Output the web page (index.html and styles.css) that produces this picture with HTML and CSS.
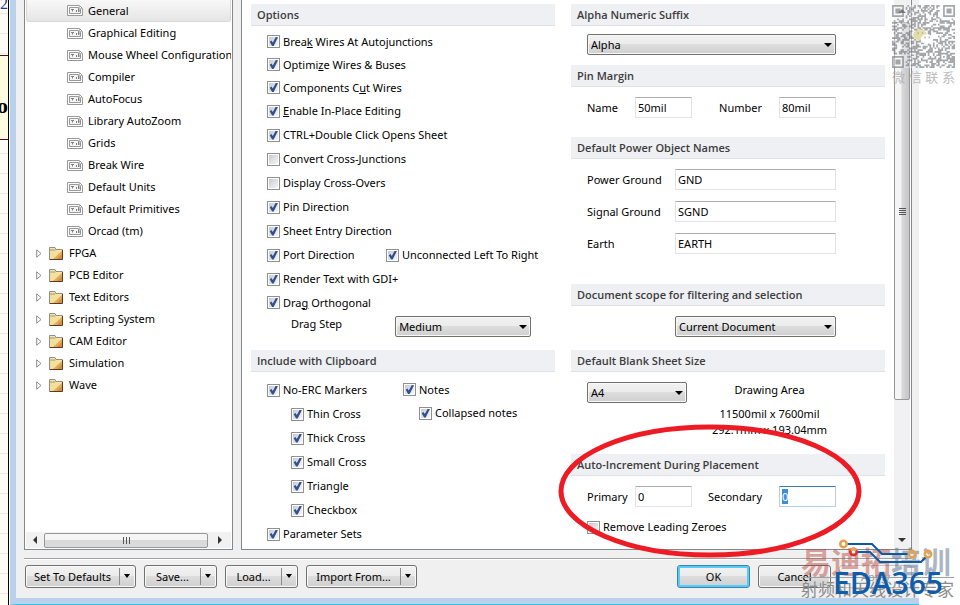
FILE: index.html
```html
<!DOCTYPE html>
<html lang="en">
<head>
<meta charset="utf-8">
<title>Preferences</title>
<link rel="stylesheet" href="styles.css">
</head>
<body>
<svg class="defs" aria-hidden="true">
  <symbol id="sheet" viewBox="0 0 16 11">
    <path d="M.5.5h12l3 3v7H.5z" fill="#fff" stroke="#999"/>
    <path d="M2.500 2.500h9v1.500h2v4.500h-11z" fill="#f4f4f4" stroke="#999"/>
    <path d="M4 4.500h3M5.500 4v2.500M9.500 5v2M11.500 4v3M13 5v2" stroke="#808080" fill="none"/>
    <path d="M12.500 .5v3h3" stroke="#bbb" fill="none"/>
  </symbol>
  <symbol id="folder" viewBox="0 0 14 13">
    <path d="M.5 12V.5H6l1 2h6.500V12z" fill="#f7e7a6" stroke="#8f8f8f"/>
    <path d="M1 3h5.500" stroke="#a0946a"/>
    <path d="M1 4h12v8H1z" fill="#f3e09a"/>
    <path d="M13 4v8H4z" fill="#e3a85c"/>
    <path d="M13 7v5H8z" fill="#d18f3f"/>
    <path d="M.5 12.500h13V3" stroke="#5a3a20" fill="none"/>
  </symbol>
  <symbol id="expand" viewBox="0 0 6 9">
    <path d="M.7.8v7.400L5 4.500z" fill="#fff" stroke="#8a8a8a"/>
  </symbol>
</svg>
<div class="screen">
  <aside class="sheet-edge">
    <div class="edge-label">2</div>
    <div class="edge-part">o</div>
  </aside>
  <div class="dialog">
    <div class="panes">
      <nav class="tree">
        <ul class="tree-list">
          <li class="node leaf selected"><svg class="i-sheet"><use href="#sheet"/></svg><a href="#">General</a></li>
          <li class="node leaf"><svg class="i-sheet"><use href="#sheet"/></svg><a href="#">Graphical Editing</a></li>
          <li class="node leaf"><svg class="i-sheet"><use href="#sheet"/></svg><a href="#">Mouse Wheel Configuration</a></li>
          <li class="node leaf"><svg class="i-sheet"><use href="#sheet"/></svg><a href="#">Compiler</a></li>
          <li class="node leaf"><svg class="i-sheet"><use href="#sheet"/></svg><a href="#">AutoFocus</a></li>
          <li class="node leaf"><svg class="i-sheet"><use href="#sheet"/></svg><a href="#">Library AutoZoom</a></li>
          <li class="node leaf"><svg class="i-sheet"><use href="#sheet"/></svg><a href="#">Grids</a></li>
          <li class="node leaf"><svg class="i-sheet"><use href="#sheet"/></svg><a href="#">Break Wire</a></li>
          <li class="node leaf"><svg class="i-sheet"><use href="#sheet"/></svg><a href="#">Default Units</a></li>
          <li class="node leaf"><svg class="i-sheet"><use href="#sheet"/></svg><a href="#">Default Primitives</a></li>
          <li class="node leaf"><svg class="i-sheet"><use href="#sheet"/></svg><a href="#">Orcad (tm)</a></li>
          <li class="node"><svg class="i-expand"><use href="#expand"/></svg><svg class="i-folder"><use href="#folder"/></svg><a href="#">FPGA</a></li>
          <li class="node"><svg class="i-expand"><use href="#expand"/></svg><svg class="i-folder"><use href="#folder"/></svg><a href="#">PCB Editor</a></li>
          <li class="node"><svg class="i-expand"><use href="#expand"/></svg><svg class="i-folder"><use href="#folder"/></svg><a href="#">Text Editors</a></li>
          <li class="node"><svg class="i-expand"><use href="#expand"/></svg><svg class="i-folder"><use href="#folder"/></svg><a href="#">Scripting System</a></li>
          <li class="node"><svg class="i-expand"><use href="#expand"/></svg><svg class="i-folder"><use href="#folder"/></svg><a href="#">CAM Editor</a></li>
          <li class="node"><svg class="i-expand"><use href="#expand"/></svg><svg class="i-folder"><use href="#folder"/></svg><a href="#">Simulation</a></li>
          <li class="node"><svg class="i-expand"><use href="#expand"/></svg><svg class="i-folder"><use href="#folder"/></svg><a href="#">Wave</a></li>
        </ul>
        <div class="hscroll">
          <span class="arrow left"></span>
          <div class="thumb"><i></i><i></i><i></i></div>
          <span class="arrow right"></span>
        </div>
      </nav>
      <main class="page">
        <div class="column">
          <section>
            <h2>Options</h2>
            <div class="checks options">
              <label class="check tight"><input type="checkbox" checked><span>Brea<u>k</u> Wires At Autojunctions</span></label>
              <label class="check tight"><input type="checkbox" checked><span>Optimi<u>z</u>e Wires &amp; Buses</span></label>
              <label class="check tight"><input type="checkbox" checked><span>Components C<u>u</u>t Wires</span></label>
              <label class="check"><input type="checkbox" checked><span><u>E</u>nable In-Place Editing</span></label>
              <label class="check"><input type="checkbox" checked><span>CTRL+Double Click Opens Sheet</span></label>
              <label class="check"><input type="checkbox"><span>Convert Cross-Junctions</span></label>
              <label class="check"><input type="checkbox"><span>Display Cross-Overs</span></label>
              <label class="check"><input type="checkbox" checked><span>Pin Direction</span></label>
              <label class="check"><input type="checkbox" checked><span>Sheet Entry Direction</span></label>
              <div class="pair">
                <label class="check"><input type="checkbox" checked><span>Port Direction</span></label>
                <label class="check"><input type="checkbox" checked><span>Unconnected Left To Right</span></label>
              </div>
              <label class="check"><input type="checkbox" checked><span>Render Text with GDI+</span></label>
              <label class="check tight"><input type="checkbox" checked><span>Dra<u>g</u> Orthogonal</span></label>
            </div>
            <div class="drag">
              <label for="drag">Drag Step</label>
              <span class="select"><select id="drag"><option>Medium</option></select></span>
            </div>
          </section>
          <section>
            <h2>Include with Clipboard</h2>
            <div class="clipboard">
              <div class="checks">
                <label class="check"><input type="checkbox" checked><span>No-ERC Markers</span></label>
                <label class="check sub"><input type="checkbox" checked><span>Thin Cross</span></label>
                <label class="check sub"><input type="checkbox" checked><span>Thick Cross</span></label>
                <label class="check sub"><input type="checkbox" checked><span>Small Cross</span></label>
                <label class="check sub"><input type="checkbox" checked><span>Triangle</span></label>
                <label class="check sub"><input type="checkbox" checked><span>Checkbox</span></label>
                <label class="check"><input type="checkbox" checked><span>Parameter Sets</span></label>
              </div>
              <div class="checks">
                <label class="check tight"><input type="checkbox" checked><span>Notes</span></label>
                <label class="check near"><input type="checkbox" checked><span>Collapsed notes</span></label>
              </div>
            </div>
          </section>
        </div>
        <div class="column">
          <section>
            <h2>Alpha Numeric Suffix</h2>
            <div class="body high suffix">
              <span class="select"><select aria-label="Alpha Numeric Suffix"><option>Alpha</option></select></span>
            </div>
          </section>
          <section>
            <h2>Pin Margin</h2>
            <div class="body quad margin">
              <label for="pname">Name</label><input type="text" id="pname" value="50mil">
              <label for="pnum">Number</label><input type="text" id="pnum" value="80mil">
            </div>
          </section>
          <section>
            <h2>Default Power Object Names</h2>
            <div class="body names">
              <label for="pg">Power Ground</label><input type="text" id="pg" value="GND">
              <label for="sg">Signal Ground</label><input type="text" id="sg" value="SGND">
              <label for="earth">Earth</label><input type="text" id="earth" value="EARTH">
            </div>
          </section>
          <section>
            <h2>Document scope for filtering and selection</h2>
            <div class="body scope">
              <span class="select"><select aria-label="Document scope"><option>Current Document</option></select></span>
            </div>
          </section>
          <section>
            <h2>Default Blank Sheet Size</h2>
            <div class="body size">
              <span class="select"><select aria-label="Sheet size"><option>A4</option></select></span>
              <div class="area">
                <p class="area-title">Drawing Area</p>
                <p>11500mil x 7600mil</p>
                <p>292.1mm x 193.04mm</p>
              </div>
            </div>
          </section>
          <section class="marked">
            <h2>Auto-Increment During Placement</h2>
            <div class="body quad">
              <label for="pri">Primary</label><input type="text" id="pri" value="0">
              <label for="sec">Secondary</label><input type="text" id="sec" class="active" value="0">
            </div>
            <label class="check zeroes"><input type="checkbox"><span>Remove Leading Zeroes</span></label>
            <svg class="ring" viewBox="0 0 306 136" preserveAspectRatio="none" aria-hidden="true"><ellipse cx="153" cy="68" rx="149" ry="64" fill="none" stroke="#ed1c24" stroke-width="5"/></svg>
          </section>
        </div>
        <div class="vscroll">
          <span class="arrow up"></span>
          <div class="thumb"><i></i><i></i><i></i><i></i></div>
          <span class="arrow down"></span>
        </div>
      </main>
    </div>
    <footer class="actions">
      <div class="split wide"><button type="button">Set To Defaults</button><button type="button" class="more" aria-label="More defaults"></button></div>
      <div class="split"><button type="button">Save...</button><button type="button" class="more" aria-label="More save"></button></div>
      <div class="split"><button type="button">Load...</button><button type="button" class="more" aria-label="More load"></button></div>
      <div class="split wide"><button type="button">Import From...</button><button type="button" class="more" aria-label="More import"></button></div>
      <span class="spacer"></span>
      <button type="button" class="btn primary">OK</button>
      <button type="button" class="btn">Cancel</button>
      <button type="button" class="btn" disabled>Apply</button>
    </footer>
  </div>
  <div class="qr">
    <svg id="qr" viewBox="0 0 37 37" aria-hidden="true"></svg>
    <div class="qr-text"><span>微</span><span>信</span><span>联</span><span>系</span></div>
  </div>
  <div class="brand">
    <div class="brand-name"><span class="warm">易迪拓</span><span class="cool">培训</span></div>
    <div class="brand-tag">射频和天线设计专家</div>
    <div class="logo">EDA365</div>
    <svg class="circuit" viewBox="0 0 94 26" aria-hidden="true">
      <g fill="none" stroke="#0a5aa8" stroke-width="2">
        <path d="M8 5h25l10 10h26"/><path d="M18 13h13l10 10h41l6-6"/>
      </g>
      <g fill="none" stroke="#e3a34c" stroke-width="2.600">
        <circle cx="4.500" cy="5" r="3.200"/><circle cx="73" cy="15" r="3.200"/><circle cx="89" cy="15" r="3.200"/>
        <circle cx="14.500" cy="13" r="3.200" stroke="#d8362c"/><path d="M11.700 11.500a3.200 3.200 0 0 1 5.600 0"/>
      </g>
    </svg>
  </div>
</div>
<script src="app.js"></script>
</body>
</html>
```
FILE: styles.css
```css
* { box-sizing: border-box; }
body {
  margin: 0;
  background: #fff;
  color: #000;
  font: 11px/16px "Noto Sans", "Open Sans", sans-serif;
}
button, input, select { font: inherit; color: inherit; }
.defs { position: absolute; width: 0; height: 0; }
.screen {
  position: relative;
  display: flex;
  min-height: 100vh;
  padding-right: 41px;
  overflow: hidden;
}

/* Schematic sheet behind the dialog */
.sheet-edge {
  flex: 0 0 9px;
  border-right: 1px solid #000;
  overflow: hidden;
  background: repeating-linear-gradient(transparent 0 13px, #eeebe8 13px 14px, transparent 14px 20px) #fffcf6;
  font-family: "Liberation Serif", serif;
}
.edge-label {
  height: 55px;
  display: flex;
  justify-content: flex-end;
  font-size: 16px;
  line-height: 8px;
  color: #1c3f94;
}
.edge-part {
  height: 85px;
  display: flex;
  justify-content: flex-end;
  align-items: center;
  padding-top: 16px;
  border: solid #5a0a0a;
  border-width: 1px 0;
  background: #fffce0;
  font-size: 22px;
  font-weight: bold;
}

/* Dialog frame */
.dialog {
  flex: 1;
  min-width: 0;
  display: flex;
  flex-direction: column;
  margin-left: 1px;
  padding: 0 7px 6px 8px;
  border-left: 6px solid #b9d1ea;
  border-bottom: 1px solid #2cc7e6;
  background: linear-gradient(#b9d1ea, #b9d1ea) bottom / 100% 6px no-repeat #f0f0f0;
}
.panes { flex: 1; display: flex; gap: 8px; }
.tree, .page { border: 1px solid #828790; border-top: 0; background: #fff; }
.tree {
  flex: 0 0 209px;
  min-width: 0;
  display: flex;
  flex-direction: column;
  justify-content: space-between;
  padding: 0 1px 1px;
}
.tree-list { margin: 0; padding: 0; list-style: none; overflow: hidden; }
.node {
  display: flex;
  align-items: center;
  height: 22px;
  padding-left: 10px;
  white-space: nowrap;
}
.leaf { padding-left: 41px; }
.selected {
  padding-left: 40px;
  border: 1px solid #d9d9d9;
  border-top: 0;
  border-radius: 0 0 3px 3px;
  background: linear-gradient(#f8f8f8, #e5e5e5);
}
.node a { color: inherit; text-decoration: none; }
.i-sheet { flex: none; width: 16px; height: 11px; margin-right: 5px; }
.i-expand { flex: none; width: 6px; height: 9px; margin-right: 7px; }
.i-folder { flex: none; width: 14px; height: 13px; margin-right: 6px; }

/* Scroll bars */
.hscroll { display: flex; align-items: center; height: 16px; background: #f1f1f1; }
.hscroll .arrow { flex: 0 0 18px; }
.hscroll .right { flex-basis: 23px; }
.arrow { display: flex; align-items: center; justify-content: center; }
.arrow::before { content: ""; border: 4px solid transparent; }
.left::before { border-right-color: #333; border-left: 0; }
.right::before { border-left-color: #333; border-right: 0; }
.up::before { border-bottom-color: #333; border-top: 0; }
.down::before { border-top-color: #333; border-bottom: 0; }
.thumb {
  display: flex;
  align-items: center;
  justify-content: center;
  gap: 2px;
  border: 1px solid #979797;
  border-radius: 2px;
}
.hscroll .thumb { flex: 1; height: 15px; background: linear-gradient(#f5f5f5 50%, #d9d9d9 50%, #dcdcdc); }
.hscroll i { width: 1px; height: 7px; background: #555; }
.vscroll {
  display: flex;
  flex-direction: column;
  background: #f1f1f1;
}
.vscroll .arrow { flex: 0 0 18px; }
.vscroll .up { flex-basis: 22px; }
.vscroll .thumb {
  flex: 0 1 378px;
  flex-direction: column;
  gap: 1px;
  background: linear-gradient(90deg, #f5f5f5 40%, #d9d9d9 50%, #c4c4c8);
}
.vscroll i { width: 7px; height: 1px; background: #555; }
.vscroll .down { margin-top: auto; }

/* Preferences page */
.page {
  flex: 1;
  min-width: 0;
  display: grid;
  grid-template-columns: 312fr 331fr 16px;
  padding: 0 1px 0 9px;
}
.column { padding-top: 4px; min-width: 0; }
.column:first-child { margin-right: 8px; }
.column:nth-child(2) { margin: 0 9px 0 8px; }
h2 {
  margin: 0;
  height: 22px;
  padding-left: 6px;
  border-bottom: 1px solid #dfe1e6;
  background: #eff0f4;
  color: #3c3c3c;
  font-family: "Open Sans", sans-serif;
  font-size: 11px;
  font-weight: 600;
  line-height: 21px;
}
.check { display: flex; align-items: center; gap: 3px; height: 24px; white-space: nowrap; }
.check.tight { height: 23px; }
.checks.options { padding: 4px 0 0 16px; }
input[type="checkbox"] {
  appearance: none;
  flex: none;
  width: 13px;
  height: 13px;
  margin: 0;
  border: 1px solid #8e8f8f;
  padding: 1px;
  background: linear-gradient(135deg, #c6cad0, #f6f6f6) content-box #f4f4f4;
}
input[type="checkbox"]:checked::before {
  content: "";
  display: block;
  width: 9px;
  height: 9px;
  background: #31508f;
  clip-path: polygon(8% 52%, 28% 40%, 42% 62%, 76% 0, 100% 4%, 52% 100%, 34% 100%);
}
.pair { display: grid; grid-template-columns: 119px 1fr; }
.drag { display: flex; gap: 53px; padding: 2px 24px 13px 40px; }
.drag .select { flex: 1; }
.drag label { flex: 0 0 51px; white-space: nowrap; }
.clipboard { display: grid; grid-template-columns: 136px 1fr; padding: 6px 0 0 16px; }
.sub { padding-left: 24px; }
.near { padding-left: 16px; }

.select { position: relative; display: block; }
.select::after {
  content: "";
  position: absolute;
  right: 4px;
  top: 9px;
  border: 4px solid transparent;
  border-top-color: #000;
  border-bottom: 0;
}
select {
  appearance: none;
  display: block;
  width: 100%;
  height: 21px;
  padding: 0 3px;
  border: 1px solid #707070;
  border-radius: 2px;
  background: linear-gradient(#f2f2f2, #ebebeb 50%, #dddddd 50%, #cfcfcf);
  box-shadow: inset 0 0 0 1px #f8f8f8;
}
input[type="text"] {
  width: 100%;
  min-width: 0;
  height: 21px;
  padding: 0 2px;
  border: 1px solid #e2e3ea;
  border-top-color: #abadb3;
  border-radius: 1px;
  background: #fff;
}
input.active { border-color: #b5cfe7; border-top-color: #3d7bad; outline: 0; }
input::selection { background: #3c8ddb; color: #fff; }

.body { padding: 10px 49px 0 16px; }
.high { padding-top: 8px; padding-bottom: 10px; }
.quad { display: grid; grid-template-columns: 48px 1fr 87px 1fr; align-items: center; }
.quad label:nth-of-type(2) { padding-right: 17px; text-align: right; }
.margin { padding-bottom: 19px; }
.names { display: grid; grid-template-columns: 88px 1fr; row-gap: 11px; align-items: center; padding-bottom: 30px; }
.scope { padding-left: 104px; padding-bottom: 13px; }
.size { display: grid; grid-template-columns: 100px 1fr; padding-right: 33px; }
.area { padding-bottom: 16px; text-align: center; }
.area p { margin: 0; white-space: nowrap; }
.area .area-title { margin-bottom: 8px; }
.marked { position: relative; }
.zeroes { margin: 8px 0 9px 16px; }
.ring { position: absolute; left: -14px; top: -31px; width: 306px; height: 136px; pointer-events: none; }

/* Action bar */
.actions {
  display: flex;
  gap: 8px;
  margin-top: 8px;
  padding: 6px 0 10px 1px;
  border-top: 1px solid #a0a0a0;
  box-shadow: inset 0 1px #fff;
}
.spacer { flex: 1; }
.btn, .split {
  flex: 0 0 73px;
  height: 23px;
  border: 1px solid #707070;
  border-radius: 3px;
  background: linear-gradient(#f2f2f2, #ebebeb 50%, #dddddd 50%, #cfcfcf);
  box-shadow: inset 0 0 0 1px #fafafa;
}
.btn { padding: 0; }
.primary { border-color: #3c7fb1; box-shadow: inset 0 0 0 2px #56cdf4; }
.btn:disabled { border-color: #c0c4c8; background: #f4f4f4; color: #9a9a9a; }
.split { display: flex; }
.split.wide { flex-basis: 111px; }
.split button { flex: 1; padding: 0; border: 0; background: none; white-space: nowrap; }
.split .more { flex: 0 0 16px; margin: 2px 0; border-left: 1px solid #8a8a8a; }
.more::before {
  content: "";
  display: block;
  width: 0;
  margin: 0 5px 2px 4px;
  border: 3px solid transparent;
  border-top: 4px solid #000;
  border-bottom: 0;
}

/* Watermarks laid over the window */
.qr { position: absolute; top: 5px; right: 5px; width: 63px; opacity: .75; }
.qr svg { display: block; width: 63px; height: 63px; }
.qr-text {
  display: flex;
  justify-content: space-between;
  color: #a8a8a8;
  font: 13px/18px "Noto Sans CJK SC", sans-serif;
}
.brand { position: absolute; right: 6px; bottom: 4px; width: 153px; height: 62px; }
.brand-name {
  position: absolute;
  top: 4px;
  left: 0;
  width: 153px;
  border-bottom: 1px solid #a0a0a0;
  font: bold 30px/34px "Noto Sans CJK SC", sans-serif;
  white-space: nowrap;
}
.warm { color: rgba(178, 60, 50, .45); }
.cool { color: rgba(90, 110, 140, .5); }
.brand-tag {
  position: absolute;
  top: 39px;
  left: 0;
  color: #8c8c8c;
  font: 17px/22px "Noto Sans CJK SC", sans-serif;
  white-space: nowrap;
}
.logo {
  position: absolute;
  top: 27px;
  left: 32px;
  color: #0f5cab;
  font: 600 30px/34px "Open Sans", sans-serif;
}
.circuit { position: absolute; top: 0; left: 38px; width: 94px; height: 26px; }
```
FILE: app.js
```js
const SIZE = 37;
const finders = [[0, 0], [30, 0], [0, 30]];

function squareRing(x, y, left, top, size) {
  const dx = x - left, dy = y - top;
  if (dx < 0 || dy < 0 || dx >= size || dy >= size) return null;
  const edge = Math.min(dx, dy, size - 1 - dx, size - 1 - dy);
  return edge !== 1;
}

function moduleOn(x, y, noise) {
  for (const [left, top] of finders) {
    const ring = squareRing(x, y, left, top, 7);
    if (ring !== null) return ring;
    if (x >= left - 1 && x <= left + 7 && y >= top - 1 && y <= top + 7) return false;
  }
  const align = squareRing(x, y, 28, 28, 5);
  if (align !== null) return align;
  return noise;
}

let seed = 91;
let path = "";
for (let y = 0; y < SIZE; y++) {
  for (let x = 0; x < SIZE; x++) {
    seed = (seed * 1103515 + 12345) % 2147483648;
    if (moduleOn(x, y, seed / 2147483648 > 0.48)) path += `M${x} ${y}h1v1h-1z`;
  }
}
document.getElementById("qr").innerHTML =
  `<rect width="37" height="37" fill="#fff" opacity=".5"/>
   <path d="${path}" fill="#888b90"/>
   <ellipse cx="16.500" cy="17.500" rx="4" ry="3.200" fill="#ddd58c"/>
   <ellipse cx="20.500" cy="20" rx="3.600" ry="2.800" fill="#fff"/>
   <path d="M15 16.500h.8M17.500 16.500h.8M19 19h.8M21.500 19h.8" stroke="#999"/>`;

const active = document.getElementById("sec");
active.focus();
active.select();
```
